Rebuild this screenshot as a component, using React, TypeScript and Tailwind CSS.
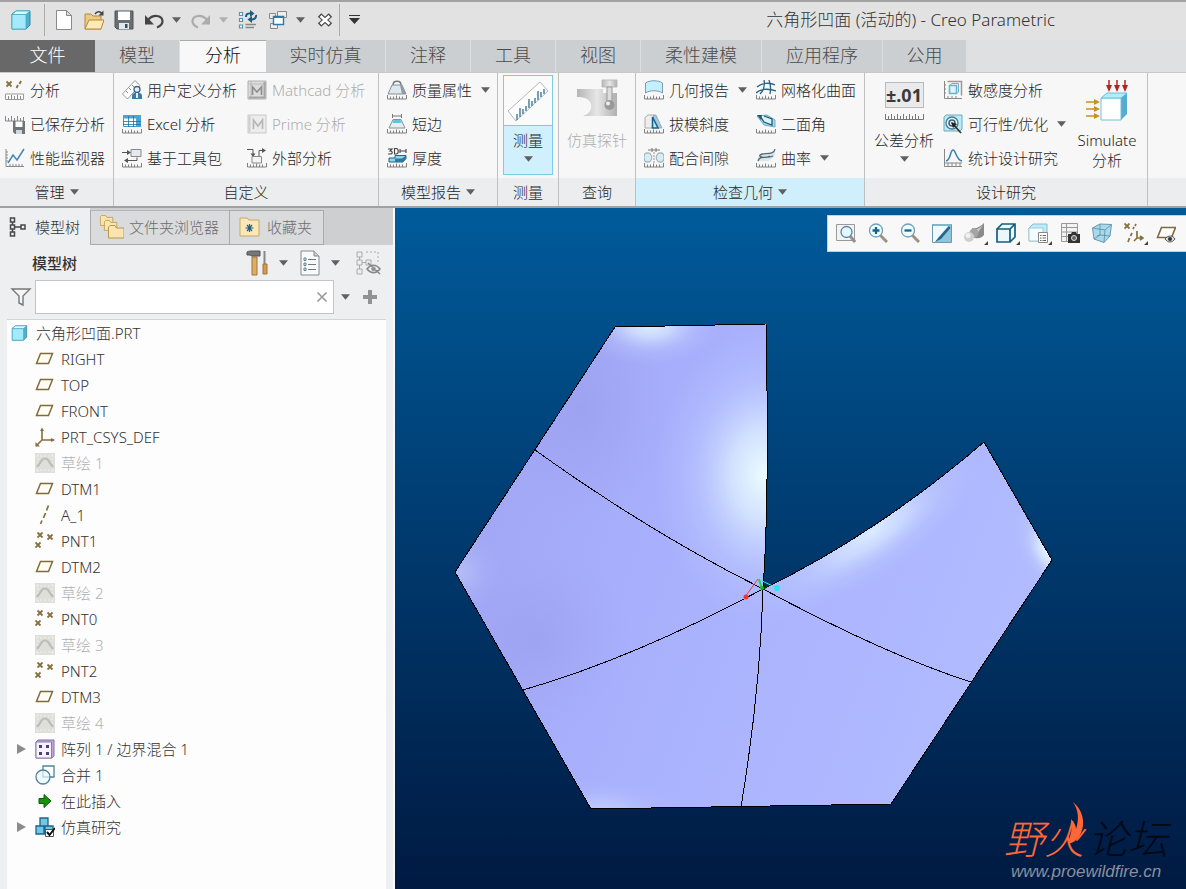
import React from "react";

type IconName = keyof typeof ICONS;

const Ruler = () => (
  <path d="M.5 15v4h19v-4M3.5 16.5V19M6.5 16.5V19M9.5 15.5V19M12.5 16.5V19M15.5 16.5V19" fill="none" stroke="#808080" />
);

const Cross = ({ x, y }: { x: number; y: number }) => (
  <path d={`M${x - 2.5} ${y - 2.5}l5 5m0-5l-5 5`} stroke="#85713f" strokeWidth="1.8" />
);

const Sheet = () => (
  <>
    <path d="M2.5.5h10l5 5v14h-15z" fill="#fff" stroke="#8a8a8a" />
    <path d="M12.500.5v5h5z" fill="#ddd" stroke="#8a8a8a" />
  </>
);

const ICONS = {
  part: (
    <>
      <path d="M1 4l4-3h14v14l-4 4H1z" fill="#4fb0cc" stroke="#2e8ba6" />
      <path d="M1 4.500h14V19H1z" fill="#a3eafb" stroke="#4aa9c4" strokeWidth=".8" />
      <path d="M1 4.500l4-3.500h14l-4 3.500z" fill="#d8f8ff" stroke="#4aa9c4" strokeWidth=".8" />
    </>
  ),
  newFile: <Sheet />,
  open: (
    <>
      <path d="M1 19V4h6l2 2h8v13z" fill="#edca84" stroke="#b38a3e" />
      <path d="M1 19l4-9h15l-3 9z" fill="#ffe9b5" stroke="#b38a3e" />
      <path d="M11 4c2-3 5-3 7-.5" fill="none" stroke="#444" strokeWidth="1.500" />
      <path d="M19.500.5v5h-5z" fill="#444" />
    </>
  ),
  save: (
    <>
      <path d="M1 1h18v18H3l-2-2z" fill="#6b6e72" stroke="#505356" />
      <path d="M4 1.500h12V10H4z" fill="#fff" />
      <path d="M5 13h10v6H5z" fill="#dfe9f0" />
      <path d="M11 14h2.500v4H11z" fill="#3c4a55" />
    </>
  ),
  undo: (
    <>
      <path d="M4 10c5-6 14-5 14.500 1 .2 3-2 5-5.500 6.500" fill="none" stroke="#454545" strokeWidth="2.200" />
      <path d="M1 5v9.500h9z" fill="#454545" />
    </>
  ),
  redo: (
    <>
      <path d="M16 10C11 4 2 5 1.500 11c-.2 3 2 5 5.500 6.500" fill="none" stroke="#acacac" strokeWidth="2.200" />
      <path d="M19 5v9.500h-9z" fill="#acacac" />
    </>
  ),
  regen: (
    <>
      <path d="M1.500 2.500h3v3h-3zM1.500 8.500h3v3h-3zM1.500 15h3v3h-3z" fill="#fff" stroke="#5793b4" strokeWidth="1.200" />
      <path d="M7.500 14.500H18M7.500 17.500H16" stroke="#888" strokeWidth="1.300" />
      <path d="M8 7c0-3 2-4 5-3.500M18 5c.5 3-2 5-5 4.500" fill="none" stroke="#1b5d82" strokeWidth="2" />
      <path d="M12 0l4.500 3.500L12 7zM14 6v7l-4.500-3.500z" fill="#1b5d82" />
    </>
  ),
  windows: (
    <>
      <path d="M9.500 1.500h9v6h-9zM1.500 3.500h6v5h-6zM2.500 13.500h7v5h-7z" fill="#eee" stroke="#888" />
      <path d="M5.500 6.500h10v8h-10z" fill="#fff" stroke="#2a7ba6" strokeWidth="1.400" />
      <path d="M5 7h11" stroke="#2a7ba6" strokeWidth="2" />
    </>
  ),
  close: (
    <>
      <path d="M4.500 5l11 10M15.500 5l-11 10" stroke="#4a4a4a" strokeWidth="5" />
      <path d="M5.500 6l9 8M14.500 6l-9 8" stroke="#fff" strokeWidth="2.600" />
    </>
  ),
  analysis: (
    <>
      <Cross x={4} y={4} />
      <path d="M11.500 8l1.500-3M14.500 4L16 1" stroke="#85713f" strokeWidth="1.800" />
      <path d="M.5 14h18v5.500H.5z" fill="#fff" stroke="#999" />
      <path d="M3.500 16v3M6.500 15v4M9.500 16v3M12.500 15v4M15.500 16v3" stroke="#888" />
    </>
  ),
  saved: (
    <>
      <path d="M.5 2v5h18V3M3.500 4v3M6.500 2v5M9.500 4v3M12.500 2v5M15.500 4v3" fill="none" stroke="#888" />
      <path d="M8 7h12v13H10l-2-2z" fill="#707478" />
      <path d="M10.500 7.500h7V13h-7z" fill="#fff" />
      <path d="M11 16h6v4h-6z" fill="#cfd8de" />
    </>
  ),
  monitor: (
    <>
      <path d="M1 1v17.500h18M1 4h2M1 7h2M1 10h2M1 13h2M5 16v2M8 16v2M11 16v2M14 16v2M17 16v2" stroke="#888" fill="none" />
      <path d="M3 15l5-8 4 5 7-11" fill="none" stroke="#4089b5" strokeWidth="1.500" />
    </>
  ),
  userDef: (
    <>
      <path d="M.5 14L13 .500l5 5L5.500 19z" fill="#fff" stroke="#999" />
      <path d="M4 11l2 2M7 8l2 2M10 5l2 2" stroke="#888" />
      <circle cx="15" cy="9.500" r="3" fill="#eee" stroke="#31688c" strokeWidth="1.300" />
      <path d="M10 19v-3c0-2 1-3 3-3h4c2 0 3 1 3 3v3z" fill="#3c7ca3" />
      <path d="M14 13h2v5h-2z" fill="#e2eef5" />
    </>
  ),
  excel: (
    <>
      <path d="M1.500 1.500h17v11h-17z" fill="#fff" stroke="#4496c4" />
      <path d="M1 1h18v3.500H1zM14 1h5v12h-5z" fill="#4aa3d1" />
      <path d="M1 7.500h18M1 10.500h18M6.500 2v11M11.500 2v11" stroke="#1e719f" strokeWidth=".8" />
      <Ruler />
    </>
  ),
  toolkit: (
    <>
      <path d="M9 1.500h10v7H9z" fill="#e4ebee" stroke="#888" />
      <path d="M0 4.500h7M4 12.500h11v-3" fill="none" stroke="#555" />
      <path d="M5 2l4 2.500L5 7zM6 10l-4 2.500L6 15z" fill="#555" />
      <Ruler />
    </>
  ),
  mathcad: (
    <>
      <path d="M1 1h18v18H1z" fill="#dcdcdc" stroke="#b0b0b0" />
      <path d="M4 1v18M1 4h18" stroke="#bbb" />
      <path d="M5.500 15V7l4.500 5 4.500-5v8" fill="none" stroke="#8f8f8f" strokeWidth="1.700" />
      <path d="M2 17.500h16M17.500 2v16" stroke="#a5a5a5" strokeWidth="2" />
    </>
  ),
  prime: (
    <>
      <path d="M1 1h18v18H1z" fill="#ececec" stroke="#c8c8c8" />
      <path d="M6.500 15V6l4.500 6 4.500-6v9" fill="none" stroke="#b7b7b7" strokeWidth="1.700" />
      <path d="M2.500 18V2" stroke="#cfcfcf" strokeWidth="2" />
    </>
  ),
  external: (
    <>
      <path d="M0 1.500h6v5M12 8.500v-6h5" fill="none" stroke="#555" />
      <path d="M3.500 5.500h5L6 9zM15 0l4 2.500L15 5z" fill="#555" />
      <path d="M5 8.500h9.500V15H5z" fill="#f4f4f4" stroke="#888" />
      <Ruler />
    </>
  ),
  mass: (
    <>
      <path d="M6 5c0-5 8-5 8 0" fill="none" stroke="#777" strokeWidth="1.400" />
      <path d="M5 5h10l4 9H1z" fill="#dce8ed" stroke="#858f95" />
      <path d="M13 5h2l4 9h-4z" fill="#8e9ca4" />
      <Ruler />
    </>
  ),
  edge: (
    <>
      <path d="M5.500 0v4M14.500 0v4M5 2h10" stroke="#777" />
      <path d="M6 5.500h8l4 8.500H2z" fill="#e7eef1" stroke="#8a9297" />
      <path d="M6.500 6h7l1 3h-9z" fill="#5cc5e4" />
      <Ruler />
    </>
  ),
  thick: (
    <>
      <path d="M1 1h4L3 3c3 0 3 3 0 3H1M7.500.500V6h1.500c3 0 3-5.500 0-5.500zM13 1v4M19 1v4M13 3h6" fill="none" stroke="#444" strokeWidth="1.100" />
      <path d="M2 10h6V7.500h11v3L16 14H2z" fill="#8ed5ed" stroke="#1f6587" />
      <path d="M8 10.500h7l4-3v3L16 14H8z" fill="#33799b" />
      <Ruler />
    </>
  ),
  geometry: (
    <>
      <path d="M1.500 13V3c4-3 13-3 17 0v10c-4-3-13-3-17 0z" fill="#c4effc" stroke="#789cab" />
      <Ruler />
    </>
  ),
  draft: (
    <>
      <path d="M1 3.500L4 1h6l-2 13H1z" fill="#eee" stroke="#aaa" />
      <path d="M10 1h2l6 13h-4L9 4z" fill="#a4cbdb" stroke="#7e9da9" strokeWidth=".7" />
      <path d="M8.500 3v11H14z" fill="#b8edfc" stroke="#185f87" strokeWidth="1.500" />
      <Ruler />
    </>
  ),
  fit: (
    <>
      <path d="M4 2h12M8 0v4M12 0v4" stroke="#777" />
      <path d="M1.500 5h4c3 3 3 6 0 9h-4c-2-3-2-6 0-9zM14.500 5h4c2 3 2 6 0 9h-4c-3-3-3-6 0-9z" fill="#d7edf4" stroke="#8b9da5" />
      <path d="M10 4v11" stroke="#999" strokeDasharray="2 1" />
      <Ruler />
    </>
  ),
  mesh: (
    <>
      <path d="M1 7c5-4 13-5 18-2M0 13c4-4 12-5 20-2M8 0c1 5 0 10-4 14M13 0c2 5 2 9 1 14" fill="none" stroke="#286181" strokeWidth="1.300" />
      <Ruler />
    </>
  ),
  dihedral: (
    <>
      <path d="M1 2l10-1 8 5v7L8 11z" fill="#9cdcf0" stroke="#6aafc6" />
      <path d="M4 2l4 6 8 3V5L8 2" fill="#d7f4fb" stroke="#275770" strokeWidth="1.300" />
      <path d="M1 1h5L5 6z" fill="#275770" />
      <Ruler />
    </>
  ),
  curvature: (
    <>
      <path d="M2 13c-1-6 4-7 8-7s7-1 9-5v6c-2 4-6 6-10 6z" fill="#dfe5e7" />
      <path d="M19 1c-1 7-12 3-15 6-2 3 9 3 13 1M2 13c2-6 7-2 12-5" fill="none" stroke="#4a6b78" strokeWidth="1.300" />
      <Ruler />
    </>
  ),
  sensitivity: (
    <>
      <path d="M1.500 1v17.500H19M5 18v-2M9 18v-2M13 18v-2M1 5h2M1 9h2M1 13h2" fill="none" stroke="#888" />
      <path d="M4.500 1.500h14v14" fill="none" stroke="#999" strokeWidth="1.500" />
      <path d="M6.500 5.500h7v8h-7z" fill="#ddf6fd" stroke="#6bb3cc" strokeWidth="1.600" />
      <path d="M7 5l2-1.500h6.500V12L14 13.500" fill="none" stroke="#6bb3cc" />
    </>
  ),
  optimize: (
    <>
      <path d="M1 3l2-2h16v14l-2 2H1z" fill="#b8ecfa" stroke="#6baabd" />
      <circle cx="9" cy="9" r="6" fill="#e9f9fe" stroke="#55758a" strokeWidth="1.300" />
      <circle cx="9" cy="9" r="3" fill="none" stroke="#345f79" strokeWidth="1.500" />
      <path d="M9 9l9 10" stroke="#333" strokeWidth="1.700" />
      <path d="M8 8l6 2-4 4z" fill="#222" />
    </>
  ),
  statistics: (
    <>
      <path d="M1.500 1v17.500H19M1 15h18M5 15v4M9 15v4M13 15v4M17 15v4" fill="none" stroke="#888" />
      <path d="M3 13c5-1 4-11 7-11s3 10 9 11" fill="none" stroke="#357fac" strokeWidth="1.500" />
    </>
  ),
  tree: (
    <path d="M2.500 1h4v4h-4zM2.500 8h4v4h-4zM2.500 15h4v4h-4zM13 8h4v4h-4zM4.500 5v3M4.500 12v3M6.500 10H13" fill="none" stroke="#484848" strokeWidth="1.500" />
  ),
  plane: <path d="M5.500 4.500h12l-4 10h-12z" fill="#fffdf6" stroke="#806b3a" strokeWidth="1.500" />,
  csys: (
    <>
      <path d="M7 2v11h12M7 13l-6 6" stroke="#85713f" strokeWidth="1.600" fill="none" />
      <path d="M5 4l2-3.500L9 4zM16 11l4 2-4 2zM.500 15v4.500H5z" fill="#85713f" />
    </>
  ),
  sketch: (
    <>
      <path d="M0 0h20v20H0z" fill="#dedfda" />
      <path d="M1 3h18M1 17h18M3 1v18M17 1v18" stroke="#f1f1ee" strokeDasharray="2 2" />
      <path d="M2 14l3-4c3-6 7-6 10 0l3 4" fill="none" stroke="#bcbdb3" strokeWidth="2.200" />
    </>
  ),
  axis: <path d="M13.500.500l-2 5M10.500 8l-2 5M7 15.500L5.500 19" stroke="#85713f" strokeWidth="1.700" />,
  point: (
    <>
      <Cross x={5} y={4} />
      <Cross x={15} y={6} />
      <Cross x={3} y={14} />
    </>
  ),
  pattern: (
    <>
      <path d="M1 3l2-2h16v16l-2 2H1z" fill="#bda9d7" stroke="#8172a4" />
      <path d="M1 3h15.500v16H1z" fill="#f7f2ff" stroke="#8c7baa" />
      <path d="M4 6h3v3H4zM11 6h3v3h-3zM4 13h3v3H4zM11 13h3v3h-3z" fill="#4d3e79" />
    </>
  ),
  merge: (
    <>
      <path d="M8 1h11v11H8z" fill="#fff" stroke="#4f8297" strokeWidth="1.300" />
      <circle cx="8" cy="12" r="7" fill="#eafaff" fillOpacity=".7" stroke="#4f8297" strokeWidth="1.300" />
    </>
  ),
  insert: <path d="M4 7.500h5v-4l7 6.500-7 6.500v-4H4z" fill="#17920f" stroke="#0b5e08" />,
  study: (
    <>
      <path d="M5 1h8v8H5zM1 9h8v8H1zM10 9h8v8h-8z" fill="#74c6e6" stroke="#1f6389" strokeWidth="1.300" />
      <path d="M10.500 12.500h8v7h-8z" fill="#fff" stroke="#555" />
      <path d="M12 15l2.500 3L20 11" fill="none" stroke="#111" strokeWidth="2" />
    </>
  ),
  zoomFit: (
    <>
      <path d="M.500 1.500h18v16H.500z" fill="#f3f3f3" stroke="#999" />
      <path d="M14 13l5 6" stroke="#9a8f86" strokeWidth="3" />
      <circle cx="10.500" cy="9" r="5.500" fill="#e4f7fd" stroke="#4e87a5" strokeWidth="1.300" />
    </>
  ),
  zoomIn: (
    <>
      <path d="M12 12l7 7" stroke="#a1907f" strokeWidth="3" />
      <circle cx="8" cy="7.500" r="6.500" fill="#eefbff" stroke="#719fb5" strokeWidth="1.300" />
      <path d="M4.500 7.500h7M8 4v7" stroke="#17638c" strokeWidth="2.300" />
    </>
  ),
  zoomOut: (
    <>
      <path d="M12 12l7 7" stroke="#a1907f" strokeWidth="3" />
      <circle cx="8" cy="7.500" r="6.500" fill="#eefbff" stroke="#719fb5" strokeWidth="1.300" />
      <path d="M4.500 7.500h7" stroke="#17638c" strokeWidth="2.300" />
    </>
  ),
  repaint: (
    <>
      <path d="M.500 1.500h19v18H.500z" fill="#8fc5dc" stroke="#6f99aa" />
      <path d="M1 3h15L3 19H1z" fill="#eefafd" />
      <path d="M18.500 5L9 16l-6 3 4-5 10-11z" fill="#24678a" />
      <path d="M1 2h18" stroke="#7fb7cd" strokeWidth="2" />
    </>
  ),
  shading: (
    <>
      <path d="M8 5c4 1 8-1 12-5v12c-3 4-8 4-11 2z" fill="#8a8a8a" />
      <path d="M9 6c4 1 7-1 10-4l-6 9z" fill="#c9c9c9" />
      <circle cx="10" cy="10" r="4.500" fill="#a5a5a5" />
      <circle cx="5" cy="14" r="5" fill="#cfcfcf" />
      <circle cx="4" cy="12.500" r="2.500" fill="#f1f1f1" />
    </>
  ),
  cube: (
    <path d="M1 6h13v13H1zM1 6l5-5h13v13l-5 5M14 6l5-5" fill="#eaf8fc" stroke="#155d80" strokeWidth="1.700" />
  ),
  views: (
    <>
      <path d="M1 5l4-4h14v13l-4 4H1z" fill="#bcecf9" stroke="#8dbccc" />
      <path d="M1 5h14v13H1z" fill="#f3fcff" stroke="#a5cad6" />
      <path d="M10.500 9.500h9v10h-9z" fill="#fff" stroke="#888" />
      <path d="M12 12.500h1.500m1 0H18M12 15h1.500m1 0H18M12 17.500h1.500m1 0H18" stroke="#666" />
    </>
  ),
  camera: (
    <>
      <path d="M1.500.500h16v18h-16zM1 4.500h17M1 9h17M1 13.500h17M6.500 0v18" fill="#f2f2f2" stroke="#999" />
      <path d="M8 11h3l1-2h4l1 2h3v9H8z" fill="#333" />
      <circle cx="14" cy="15" r="2.500" fill="#666" stroke="#ddd" />
    </>
  ),
  perspective: (
    <>
      <path d="M.500 5L8 1l11.500.500L18 13l-6 6.500L2 16z" fill="#a9d9ea" stroke="#659aaf" />
      <path d="M.500 5L13 7l-1 12.500M13 7l6.500-5.500M5 13l3-1 10 1M8 1v11l-6 4" fill="none" stroke="#5b8da3" strokeWidth=".8" />
    </>
  ),
  datum: (
    <>
      <Cross x={3} y={3} />
      <path d="M9 6l1-2M11 3l1-2M8 10l-1.500 3M5.500 15L4 19M13 8v7h6M13 15l-3 3M16 13l3 2-3 2" fill="none" stroke="#85713f" strokeWidth="1.700" />
    </>
  ),
  planeEye: (
    <>
      <path d="M5.500 4.500h14l-4 10h-14z" fill="#fff" stroke="#80693b" strokeWidth="1.600" />
      <path d="M9 16c3-4 8-4 10 0-3 4-7 4-10 0z" fill="#ddd" stroke="#555" />
      <circle cx="14" cy="16" r="2" fill="#333" />
    </>
  ),
};

function Icon({ name, className = "h-5 w-5" }: { name: IconName; className?: string }) {
  return (
    <svg viewBox="0 0 20 20" className={`shrink-0 ${className}`} aria-hidden="true">
      {ICONS[name]}
    </svg>
  );
}

function Caret({ className = "text-[#606060]" }: { className?: string }) {
  return (
    <svg viewBox="0 0 10 6" className={`h-[6px] w-[9px] shrink-0 ${className}`} aria-hidden="true">
      <path d="M0 0h10L5 6z" fill="currentColor" />
    </svg>
  );
}

function Tool({ icon, label, caret, disabled }: { icon: IconName; label: string; caret?: boolean; disabled?: boolean }) {
  return (
    <button disabled={disabled} className={`flex h-[34px] items-center gap-[5px] whitespace-nowrap ${disabled ? "text-[#adadad]" : ""}`}>
      <Icon name={icon} />
      <span>{label}</span>
      {caret && <span className="pl-1"><Caret /></span>}
    </button>
  );
}

function Group({ title, caret, width, active, children }: { title: string; caret?: boolean; width: string; active?: boolean; children: React.ReactNode }) {
  return (
    <section className={`flex shrink-0 flex-col border-r border-[#bfc0c2] ${width}`}>
      <div className="flex h-[105px] items-start">{children}</div>
      <footer className={`flex h-7 items-center justify-center gap-[5px] ${active ? "bg-[#cfeffc]" : "bg-[#ecedef]"}`}>
        {title}
        {caret && <Caret />}
      </footer>
    </section>
  );
}

const TABS = [
  ["模型", "w-[85px]"],
  ["分析", "w-[86px]"],
  ["实时仿真", "w-[120px]"],
  ["注释", "w-[85px]"],
  ["工具", "w-[85px]"],
  ["视图", "w-[85px]"],
  ["柔性建模", "w-[121px]"],
  ["应用程序", "w-[121px]"],
  ["公用", "w-[84px]"],
];

function TitleBar() {
  const btn = "flex h-6 items-center";
  return (
    <header className="flex h-10 items-center border-t-2 border-[#a2a2a2] bg-[#e2e2e2] pb-[3px]">
      <div className="flex h-8 w-[45px] items-center border-r border-[#aaa] pl-[11px]"><Icon name="part" /></div>
      <div className="flex items-center gap-[10px] pl-[9px]">
        <button aria-label="新建" className={btn}><Icon name="newFile" /></button>
        <button aria-label="打开" className={btn}><Icon name="open" /></button>
        <button aria-label="保存" className={btn}><Icon name="save" /></button>
        <button aria-label="撤消" className={`${btn} gap-2`}><Icon name="undo" /><Caret /></button>
        <button aria-label="重做" className={`${btn} gap-2`}><Icon name="redo" /><Caret className="text-[#b0b0b0]" /></button>
        <button aria-label="重新生成" className={btn}><Icon name="regen" /></button>
        <button aria-label="窗口" className={`${btn} gap-2`}><Icon name="windows" /><Caret /></button>
        <button aria-label="关闭" className={btn}><Icon name="close" /></button>
      </div>
      <button aria-label="自定义快速访问工具栏" className="ml-1 flex h-8 items-center border-l border-[#aaa] pl-[9px]">
        <svg viewBox="0 0 11 9" className="h-[9px] w-[11px]"><path d="M0 .500h11" stroke="#333" /><path d="M0 3h11L5.500 9z" fill="#333" /></svg>
      </button>
      <h1 className="mr-[131px] ml-auto text-[17px] leading-6 whitespace-nowrap text-[#333]">六角形凹面 (活动的) - Creo Parametric</h1>
    </header>
  );
}

function TabBar() {
  return (
    <nav className="flex h-[33px] overflow-hidden border-b border-[#c8c8c8] bg-[#dfe0e1] text-[18px] leading-7">
      <button className="w-[95px] shrink-0 bg-[#686868] pb-[3px] text-white">文件</button>
      {TABS.map(([label, width]) => (
        <button
          key={label}
          className={`shrink-0 pb-[3px] ${width} ${label === "分析" ? "border-t border-[#aaa] bg-[#f8f8f8] text-[#111]" : "border-r border-[#dcdfe1] bg-[#cbcfd2] text-[#4b4b4b]"}`}
        >
          {label}
        </button>
      ))}
    </nav>
  );
}

function Ribbon() {
  return (
    <div className="flex overflow-hidden border-b-2 border-[#a0a1a2] bg-[#f7f7f7] text-[15px] leading-5 text-[#262626]">
      <Group title="管理" caret width="w-[114px]">
        <div className="pl-[5px]">
          <Tool icon="analysis" label="分析" />
          <Tool icon="saved" label="已保存分析" />
          <Tool icon="monitor" label="性能监视器" />
        </div>
      </Group>
      <Group title="自定义" width="w-[265px]">
        <div className="w-[133px] pl-2">
          <Tool icon="userDef" label="用户定义分析" />
          <Tool icon="excel" label="Excel 分析" />
          <Tool icon="toolkit" label="基于工具包" />
        </div>
        <div>
          <Tool icon="mathcad" label="Mathcad 分析" disabled />
          <Tool icon="prime" label="Prime 分析" disabled />
          <Tool icon="external" label="外部分析" />
        </div>
      </Group>
      <Group title="模型报告" caret width="w-[119px]">
        <div className="pl-2">
          <Tool icon="mass" label="质量属性" caret />
          <Tool icon="edge" label="短边" />
          <Tool icon="thick" label="厚度" />
        </div>
      </Group>
      <Group title="测量" width="w-[61px]">
        <button className="mx-auto mt-[2px] flex h-[100px] w-[50px] flex-col border border-[#7bcde5] bg-[#cff0fc]">
          <span className="flex h-[50px] w-full items-center justify-center border-b border-[#7bcde5] bg-[#fafafa]">
            <svg viewBox="0 0 44 44" className="h-11 w-11">
              <path d="M2 32L34 3l8 9-32 30z" fill="#fff" stroke="#b5b5b5" />
              <path d="M11 41v-6M14 38v-9M17 35v-5M20 32v-5M23 29v-9M26 27v-5M29 24v-5M32 21v-9M35 18v-5M38 15v-5" stroke="#39799b" strokeWidth="1.400" />
            </svg>
          </span>
          <span className="flex w-full flex-col items-center gap-[6px] pt-[4px]">测量<Caret /></span>
        </button>
      </Group>
      <Group title="查询" width="w-[77px]">
        <button disabled className="flex w-full flex-col items-center gap-3 pt-[5px] text-[#adadad]">
          <svg viewBox="0 0 44 40" className="h-10 w-11">
            <defs><linearGradient id="probe" x2="1"><stop stopColor="#b5b5b5" /><stop offset=".5" stopColor="#e6e6e6" /><stop offset="1" stopColor="#b0b0b0" /></linearGradient></defs>
            <path d="M2 11h26v4h14v23H8c12-3 12-20-6-19z" fill="url(#probe)" />
            <path d="M27 2h15v7H27z" fill="url(#probe)" stroke="#bbb" />
            <path d="M32 9h5v17h-5z" fill="#ddd" stroke="#999" />
            <circle cx="34.500" cy="27" r="5" fill="#999" /><circle cx="33" cy="25.500" r="2" fill="#eee" />
          </svg>
          <span>仿真探针</span>
        </button>
      </Group>
      <Group title="检查几何" caret active width="w-[229px]">
        <div className="w-[120px] pl-2">
          <Tool icon="geometry" label="几何报告" caret />
          <Tool icon="draft" label="拔模斜度" />
          <Tool icon="fit" label="配合间隙" />
        </div>
        <div>
          <Tool icon="mesh" label="网格化曲面" />
          <Tool icon="dihedral" label="二面角" />
          <Tool icon="curvature" label="曲率" caret />
        </div>
      </Group>
      <Group title="设计研究" width="w-[283px]">
        <button className="flex w-[78px] flex-col items-center pt-[9px]">
          <span className="flex h-[26px] w-[39px] items-center justify-center border border-[#bbb] bg-[#e9eaeb] text-[18px] font-bold text-[#3a3a3a]">±.01</span>
          <svg viewBox="0 0 39 8" className="mt-1 h-2 w-[39px]"><path d="M.5 2v5.500h38V2M3.500 4v3M6.500 2v5M9.500 4v3M12.500 2v5M15.500 4v3M18.500 2v5M21.500 4v3M24.500 2v5M27.500 4v3M30.500 2v5M33.500 4v3" fill="none" stroke="#777" /></svg>
          <span className="pt-[10px] pb-[6px]">公差分析</span>
          <Caret />
        </button>
        <div className="w-[126px]">
          <Tool icon="sensitivity" label="敏感度分析" />
          <Tool icon="optimize" label="可行性/优化" caret />
          <Tool icon="statistics" label="统计设计研究" />
        </div>
        <button className="flex w-[76px] flex-col items-center pt-[5px]">
          <svg viewBox="0 0 44 44" className="h-11 w-11">
            <path d="M16 20l6-5h20v21l-6 6H16z" fill="#54acd0" />
            <path d="M16 20h20v22H16z" fill="#fff" stroke="#75bfd9" />
            <path d="M16 20l6-5h20l-6 5z" fill="#b2edfb" stroke="#74bdd5" />
            <path d="M24 2v10M32 2v10M40 2v10" stroke="#b62323" strokeWidth="1.500" />
            <path d="M21 7h6l-3 7zM29 7h6l-3 7zM37 7h6l-3 7z" fill="#b62323" />
            <path d="M1 24h10M1 31h10M1 38h10" stroke="#c7921d" strokeWidth="1.500" />
            <path d="M9 21l6 3-6 3zM9 28l6 3-6 3zM9 35l6 3-6 3z" fill="#c7921d" />
          </svg>
          <span className="pt-2">Simulate</span>
          <span>分析</span>
        </button>
      </Group>
      <div className="flex flex-1 flex-col"><div className="flex-1" /><div className="h-7 bg-[#ecedef]" /></div>
    </div>
  );
}

type Node = { icon: IconName; label: string; muted?: boolean; expand?: boolean };
const NODES: Node[] = [
  { icon: "plane", label: "RIGHT" },
  { icon: "plane", label: "TOP" },
  { icon: "plane", label: "FRONT" },
  { icon: "csys", label: "PRT_CSYS_DEF" },
  { icon: "sketch", label: "草绘 1", muted: true },
  { icon: "plane", label: "DTM1" },
  { icon: "axis", label: "A_1" },
  { icon: "point", label: "PNT1" },
  { icon: "plane", label: "DTM2" },
  { icon: "sketch", label: "草绘 2", muted: true },
  { icon: "point", label: "PNT0" },
  { icon: "sketch", label: "草绘 3", muted: true },
  { icon: "point", label: "PNT2" },
  { icon: "plane", label: "DTM3" },
  { icon: "sketch", label: "草绘 4", muted: true },
  { icon: "pattern", label: "阵列 1 / 边界混合 1", expand: true },
  { icon: "merge", label: "合并 1" },
  { icon: "insert", label: "在此插入" },
  { icon: "study", label: "仿真研究", expand: true },
];

function Folder({ x, y, s = 1 }: { x: number; y: number; s?: number }) {
  return <path transform={`translate(${x} ${y}) scale(${s})`} d="M.5 2L2 .500h5L8.500 3H16v10H.500z" fill="#fbe5ae" stroke="#b99752" />;
}

function Sidebar() {
  return (
    <aside className="flex w-[395px] shrink-0 flex-col border-r-2 border-[#f7f9fa] bg-[#eeeff1] text-[15px] leading-5 text-[#333]">
      <div className="flex h-[37px] bg-[#cdcfd1]">
        <button className="flex w-[90px] items-center gap-[7px] bg-[#eeeff1] pl-2"><Icon name="tree" className="h-6 w-5" />模型树</button>
        <button className="mt-[2px] flex w-[140px] items-center gap-[5px] border border-t-[#b5b5b5] border-[#aaa] bg-[#d9dbdd] pb-[2px] pl-[9px] text-[#6c6c6c]">
          <svg viewBox="0 0 24 24" className="h-6 w-6 shrink-0"><Folder x={0} y={0} s={0.8} /><Folder x={4} y={5} s={0.8} /><Folder x={8} y={10} /></svg>
          文件夹浏览器
        </button>
        <button className="mt-[2px] flex w-[94px] items-center gap-[7px] border border-l-0 border-[#aaa] bg-[#d9dbdd] pb-[2px] pl-[9px] text-[#6c6c6c]">
          <svg viewBox="0 0 21 20" className="h-5 w-[21px] shrink-0">
            <path d="M1 4V1h7l2 2h10v16H1z" fill="#fbe7b8" stroke="#c7a969" />
            <path d="M10.500 7v8M6.500 11h8M8 8l5 6M13 8l-5 6" stroke="#226087" strokeWidth="1.200" />
          </svg>
          收藏夹
        </button>
      </div>
      <div className="flex h-[35px] items-center pr-3 pl-8">
        <h2 className="font-medium">模型树</h2>
        <button aria-label="设置" className="ml-auto flex items-center gap-[11px]">
          <svg viewBox="0 0 22 26" className="h-[26px] w-[22px]">
            <path d="M6 7h5v18H6z" fill="#dfad62" stroke="#9e7638" />
            <path d="M1 2c2-1 3-1 5-1h8v5H5.500L4 5H1z" fill="#777" stroke="#555" />
            <path d="M18.500 1v13" stroke="#888" strokeWidth="2" /><path d="M17 14h4v10h-4z" fill="#d79a4e" stroke="#9e7638" />
          </svg>
          <Caret />
        </button>
        <button aria-label="显示" className="ml-3 flex items-center gap-[11px]">
          <svg viewBox="0 0 20 26" className="h-[26px] w-5">
            <path d="M1 1h13l5 5v19H1z" fill="#f8fafb" stroke="#828b90" /><path d="M14 1v5h5" fill="#ccc" stroke="#828b90" />
            <path d="M8 9.500h8M8 14.500h8M8 19.500h8" stroke="#777" /><path d="M4 8h2v2.500H4zM4 13h2v2.500H4zM4 18h2v2.500H4z" fill="#fff" stroke="#5a7d92" />
          </svg>
          <Caret />
        </button>
        <button disabled aria-label="隐藏项" className="ml-[15px]">
          <svg viewBox="0 0 26 26" className="h-[26px] w-[26px]" fill="none" stroke="#aaa">
            <path d="M2 2h5v5H2zM2 10h5v5H2zM2 19h5v5H2zM11 10h5v5h-5zM4.500 7v3M4.500 15v4M7 12.500h4" /><path d="M11 2h12v12" strokeDasharray="2 2" />
            <path d="M12 19c4-5 9-5 13 0-4 5-9 5-13 0zM13 13l12 11" stroke="#888" strokeWidth="1.500" /><circle cx="18.500" cy="19" r="2" fill="#888" />
          </svg>
        </button>
      </div>
      <div className="flex h-[34px] items-center pl-[10px]">
        <svg viewBox="0 0 22 22" className="h-[22px] w-[22px] shrink-0"><path d="M2 3h18l-7 7v9l-4-2v-7z" fill="#f5f5f5" stroke="#777" strokeWidth="1.400" /></svg>
        <div className="ml-[3px] flex h-[34px] w-[299px] items-center border border-[#c2c4c7] bg-white">
          <input aria-label="搜索模型树" className="h-full min-w-0 flex-1 bg-transparent px-2 outline-none" />
          <button aria-label="清除" className="mr-[5px]"><svg viewBox="0 0 12 12" className="h-3 w-3"><path d="M1.500 1.500l9 9M10.500 1.500l-9 9" stroke="#999" strokeWidth="1.600" /></svg></button>
        </div>
        <button aria-label="搜索选项" className="ml-[7px]"><Caret /></button>
        <button aria-label="添加" className="ml-[13px]"><svg viewBox="0 0 14 14" className="h-[14px] w-[14px]"><path d="M7 0v14M0 7h14" stroke="#929292" strokeWidth="4" /></svg></button>
      </div>
      <ul className="mt-[5px] mr-[7px] ml-[7px] flex-1 border-t border-[#d2d4d6] bg-[#fdfdfe]">
        <li className="flex h-[26px] items-center gap-2 pl-1"><Icon name="part" className="h-4 w-[17px]" />六角形凹面.PRT</li>
        {NODES.map((n) => (
          <li key={n.label} className={`flex h-[26px] items-center ${n.muted ? "text-[#b0b0b0]" : ""}`}>
            <span className="flex w-7 shrink-0 items-center pl-[10px]">
              {n.expand && <svg viewBox="0 0 9 10" className="h-[10px] w-[9px]"><path d="M0 0l9 5-9 5z" fill="#8b8b8b" /></svg>}
            </span>
            <Icon name={n.icon} />
            <span className="pl-[6px]">{n.label}</span>
          </li>
        ))}
      </ul>
    </aside>
  );
}

const OUTLINE = "M615 327L766 324C768 420 768 520 763 589C840 552 918 499 984 442L1052 560L891 804L591 809L455 572Z";

const VIEW_TOOLS: [IconName, string, boolean][] = [
  ["zoomFit", "重新调整", false],
  ["zoomIn", "放大", false],
  ["zoomOut", "缩小", false],
  ["repaint", "重画", false],
  ["shading", "渲染", true],
  ["cube", "显示样式", true],
  ["views", "已保存方向", true],
  ["camera", "视图管理器", false],
  ["perspective", "透视图", false],
  ["datum", "基准显示", true],
  ["planeEye", "平面显示", false],
];

function Viewport() {
  return (
    <main className="relative min-w-0 flex-1 overflow-hidden bg-linear-to-b from-[#005b9b] to-[#001a42]">
      <svg viewBox="395 208 791 681" className="absolute inset-0 h-full w-full" role="img" aria-label="六角形凹面">
        <defs>
          <linearGradient id="base" x1="0" y1=".3" x2="1" y2=".6">
            <stop stopColor="#a0a5f3" /><stop offset=".35" stopColor="#a8b0fd" /><stop offset="1" stopColor="#b2bcff" />
          </linearGradient>
          <radialGradient id="glow"><stop stopColor="#ecfdff" /><stop offset=".3" stopColor="#dceeff" stopOpacity=".8" /><stop offset=".65" stopColor="#c4d2ff" stopOpacity=".35" /><stop offset="1" stopColor="#b8c4ff" stopOpacity="0" /></radialGradient>
          <radialGradient id="shade"><stop stopColor="#9496e6" stopOpacity=".4" /><stop offset="1" stopColor="#9a9cee" stopOpacity="0" /></radialGradient>
          <clipPath id="body"><path d={OUTLINE} /></clipPath>
        </defs>
        <g clipPath="url(#body)">
          <path d={OUTLINE} fill="url(#base)" />
          <ellipse cx="580" cy="410" rx="90" ry="110" fill="url(#shade)" />
          <ellipse cx="535" cy="640" rx="100" ry="90" fill="url(#shade)" />
          <ellipse cx="765" cy="475" rx="110" ry="150" fill="url(#glow)" />
          <ellipse cx="650" cy="325" rx="70" ry="40" fill="url(#glow)" opacity=".85" />
          <ellipse cx="872" cy="532" rx="130" ry="44" transform="rotate(-35 872 532)" fill="url(#glow)" opacity=".75" />
          <ellipse cx="1048" cy="552" rx="26" ry="52" transform="rotate(-30 1048 552)" fill="url(#glow)" opacity=".9" />
          <ellipse cx="600" cy="810" rx="80" ry="30" fill="url(#glow)" opacity=".35" />
          <ellipse cx="458" cy="572" rx="45" ry="45" fill="url(#glow)" opacity=".25" />
        </g>
        <g fill="none" stroke="#000" strokeWidth="1" shapeRendering="crispEdges">
          <path d={OUTLINE} />
          <path d="M535 450C610 504 685 550 763 589C834 627 905 661 971 682M523 690C610 665 690 628 763 589C761 662 753 735 741 807" />
        </g>
        <path d="M745 597l13-18" stroke="#e2444a" /><path d="M759 579l3 10" stroke="#1fd44b" strokeWidth="2" /><path d="M760 580l17 8" stroke="#41e7ed" />
        <path d="M764 583l4 3-4 4z" fill="#003c1a" />
        <circle cx="746" cy="597" r="2.500" fill="#f0342e" /><circle cx="762" cy="588" r="2" fill="#18b72d" /><circle cx="777" cy="588" r="3" fill="#24e9f2" />
      </svg>

      <div role="toolbar" aria-label="视图" className="absolute top-[7px] right-0 flex h-[37px] w-[359px] items-center gap-2 overflow-hidden border border-r-0 border-[#ccd0d4] bg-[#f8f8f9] pb-[2px] pl-[6px]">
        {VIEW_TOOLS.map(([icon, label, menu]) => (
          <button key={label} aria-label={label} className="relative flex w-6 shrink-0 justify-center">
            <Icon name={icon} />
            {menu && <svg viewBox="0 0 4 4" className="absolute -right-[2px] -bottom-[2px] h-1 w-1"><path d="M4 0v4H0z" fill="#444" /></svg>}
          </button>
        ))}
      </div>

      <div className="absolute right-[18px] bottom-[7px] flex flex-col items-center font-['Liberation_Sans','Noto_Sans_CJK_SC',sans-serif]">
        <div className="relative flex gap-1 text-[40px] leading-[44px] font-light italic">
          <span className="text-[#ff6736]">野火</span>
          <span className="text-[#000816]">论坛</span>
          <svg viewBox="0 0 20 44" className="absolute -top-[16px] left-[62px] h-11 w-5"><path d="M7 0C16 7 20 20 15 31c-3 7-8 10-13 11 2-10 5-12 3-25 3 3 5 7 5 10C13 18 13 9 7 0z" fill="#ff6736" /></svg>
        </div>
        <a href="http://www.proewildfire.cn" className="text-[17px] leading-5 text-[#8a909c] italic">www.proewildfire.cn</a>
      </div>
    </main>
  );
}

export default function App() {
  return (
    <div className="flex min-h-screen flex-col overflow-hidden font-['Noto_Sans','Noto_Sans_CJK_SC',sans-serif] font-light">
      <TitleBar />
      <TabBar />
      <Ribbon />
      <div className="flex flex-1">
        <Sidebar />
        <Viewport />
      </div>
    </div>
  );
}
